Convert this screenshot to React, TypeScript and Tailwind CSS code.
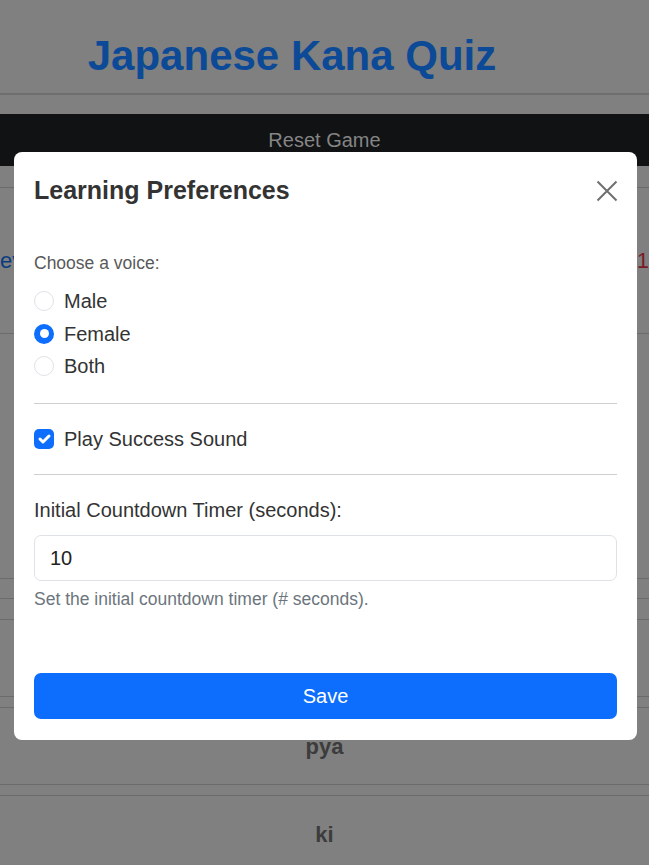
import React, { useState } from 'react';

const font = { fontFamily: '"Liberation Sans", Arial, sans-serif' };

function Radio({ checked }: { checked: boolean }) {
  return checked ? (
    <span className="w-5 h-5 rounded-full bg-[#0d6efd] flex items-center justify-center shrink-0">
      <span className="w-[9px] h-[9px] rounded-full bg-white" />
    </span>
  ) : (
    <span className="w-5 h-5 rounded-full border border-[#dee2e6] bg-white shrink-0" />
  );
}

function App() {
  const [voice, setVoice] = useState('Female');
  const [sound, setSound] = useState(true);
  const [timer, setTimer] = useState('10');

  return (
    <div className="relative min-h-[865px] bg-[#808080] overflow-hidden" style={font}>
      {/* page behind the backdrop (already dimmed colours) */}
      <header className="h-[95px] pt-[31px] flex justify-center pr-[65px] border-b-2 border-[#6e6e6e]">
        <h1 className="text-[42px] leading-[50px] font-bold text-[#0c4a97]">Japanese Kana Quiz</h1>
      </header>
      <div className="mt-[19px] h-[52px] bg-[#101214] flex items-center justify-center">
        <span className="text-[20px] text-[#858585]">Reset Game</span>
      </div>
      <div className="mt-[21px] h-[147px] border-y border-[#6b6b6b] flex items-center justify-between">
        <span className="text-[22px] text-[#0a3d80]">ev</span>
        <span className="text-[22px] text-[#7a1b27]">1</span>
      </div>
      <div className="h-[244px]" />
      <div className="h-[20px] border-t border-[#6b6b6b]" />
      <div className="h-[21px] border-t border-[#6b6b6b]" />
      <div className="flex flex-col gap-[10px]">
        {['', 'pya', 'ki'].map((r, i) => (
          <div key={i} className="h-[78px] border-y border-[#6b6b6b] flex items-center justify-center">
            <span className="text-[22px] font-bold text-[#3c3c3c]">{r}</span>
          </div>
        ))}
      </div>

      {/* modal */}
      <div className="absolute inset-0 pt-[152px]">
        <div className="ml-[14px] w-[623px] bg-white rounded-[8px] text-[#333]">
          <div className="flex items-center justify-between px-5 pt-5 pb-[21px]">
            <h5 className="text-[25px] leading-[37px] font-bold text-[#333]">Learning Preferences</h5>
            <button className="w-[24px] h-[24px] flex items-center justify-center -mr-[2px]">
              <svg width="22" height="22" viewBox="0 0 22 22">
                <path d="M1.5 1.5 L20.5 20.5 M20.5 1.5 L1.5 20.5" stroke="#6f6f6f" strokeWidth="2" fill="none" />
              </svg>
            </button>
          </div>
          <div className="px-5 pt-5 pb-[21px]">
            <p className="text-[17.5px] leading-[26px] text-[#595959]">Choose a voice:</p>
            <div className="mt-[10px] flex flex-col gap-[2.5px]">
              {['Male', 'Female', 'Both'].map(v => (
                <label key={v} onClick={() => setVoice(v)} className="h-[30px] flex items-center gap-[10px] cursor-pointer">
                  <Radio checked={voice === v} />
                  <span className="text-[20px] leading-[30px] text-[#333]">{v}</span>
                </label>
              ))}
            </div>
            <hr className="mt-[22px] mb-5 border-t border-[#cfcfcf]" />
            <label onClick={() => setSound(!sound)} className="h-[30px] flex items-center gap-[10px] cursor-pointer">
              {sound ? (
                <span className="w-5 h-5 rounded-[5px] bg-[#0d6efd] flex items-center justify-center shrink-0">
                  <svg width="20" height="20" viewBox="0 0 20 20">
                    <path d="m6 10 3 3 6-6" stroke="#fff" strokeWidth="3" strokeLinecap="round" strokeLinejoin="round" fill="none" />
                  </svg>
                </span>
              ) : (
                <span className="w-5 h-5 rounded-[5px] border border-[#dee2e6] shrink-0" />
              )}
              <span className="text-[20px] leading-[30px] text-[#333]">Play Success Sound</span>
            </label>
            <hr className="mt-5 mb-5 border-t border-[#cfcfcf]" />
            <label className="block text-[20px] leading-[30px] text-[#333]">Initial Countdown Timer (seconds):</label>
            <input
              value={timer}
              onChange={e => setTimer(e.target.value)}
              className="mt-[10px] w-full h-[46px] px-[15px] border border-[#dee2e6] rounded-[7px] text-[20px] text-[#222] outline-none"
            />
            <p className="mt-[5px] text-[17.5px] leading-[26px] text-[#6c757d]">Set the initial countdown timer (# seconds).</p>
            <button className="mt-[61px] w-full h-[46px] rounded-[7px] bg-[#0d6efd] text-white text-[20px]">Save</button>
          </div>
        </div>
      </div>
    </div>
  );
}

export default App;
